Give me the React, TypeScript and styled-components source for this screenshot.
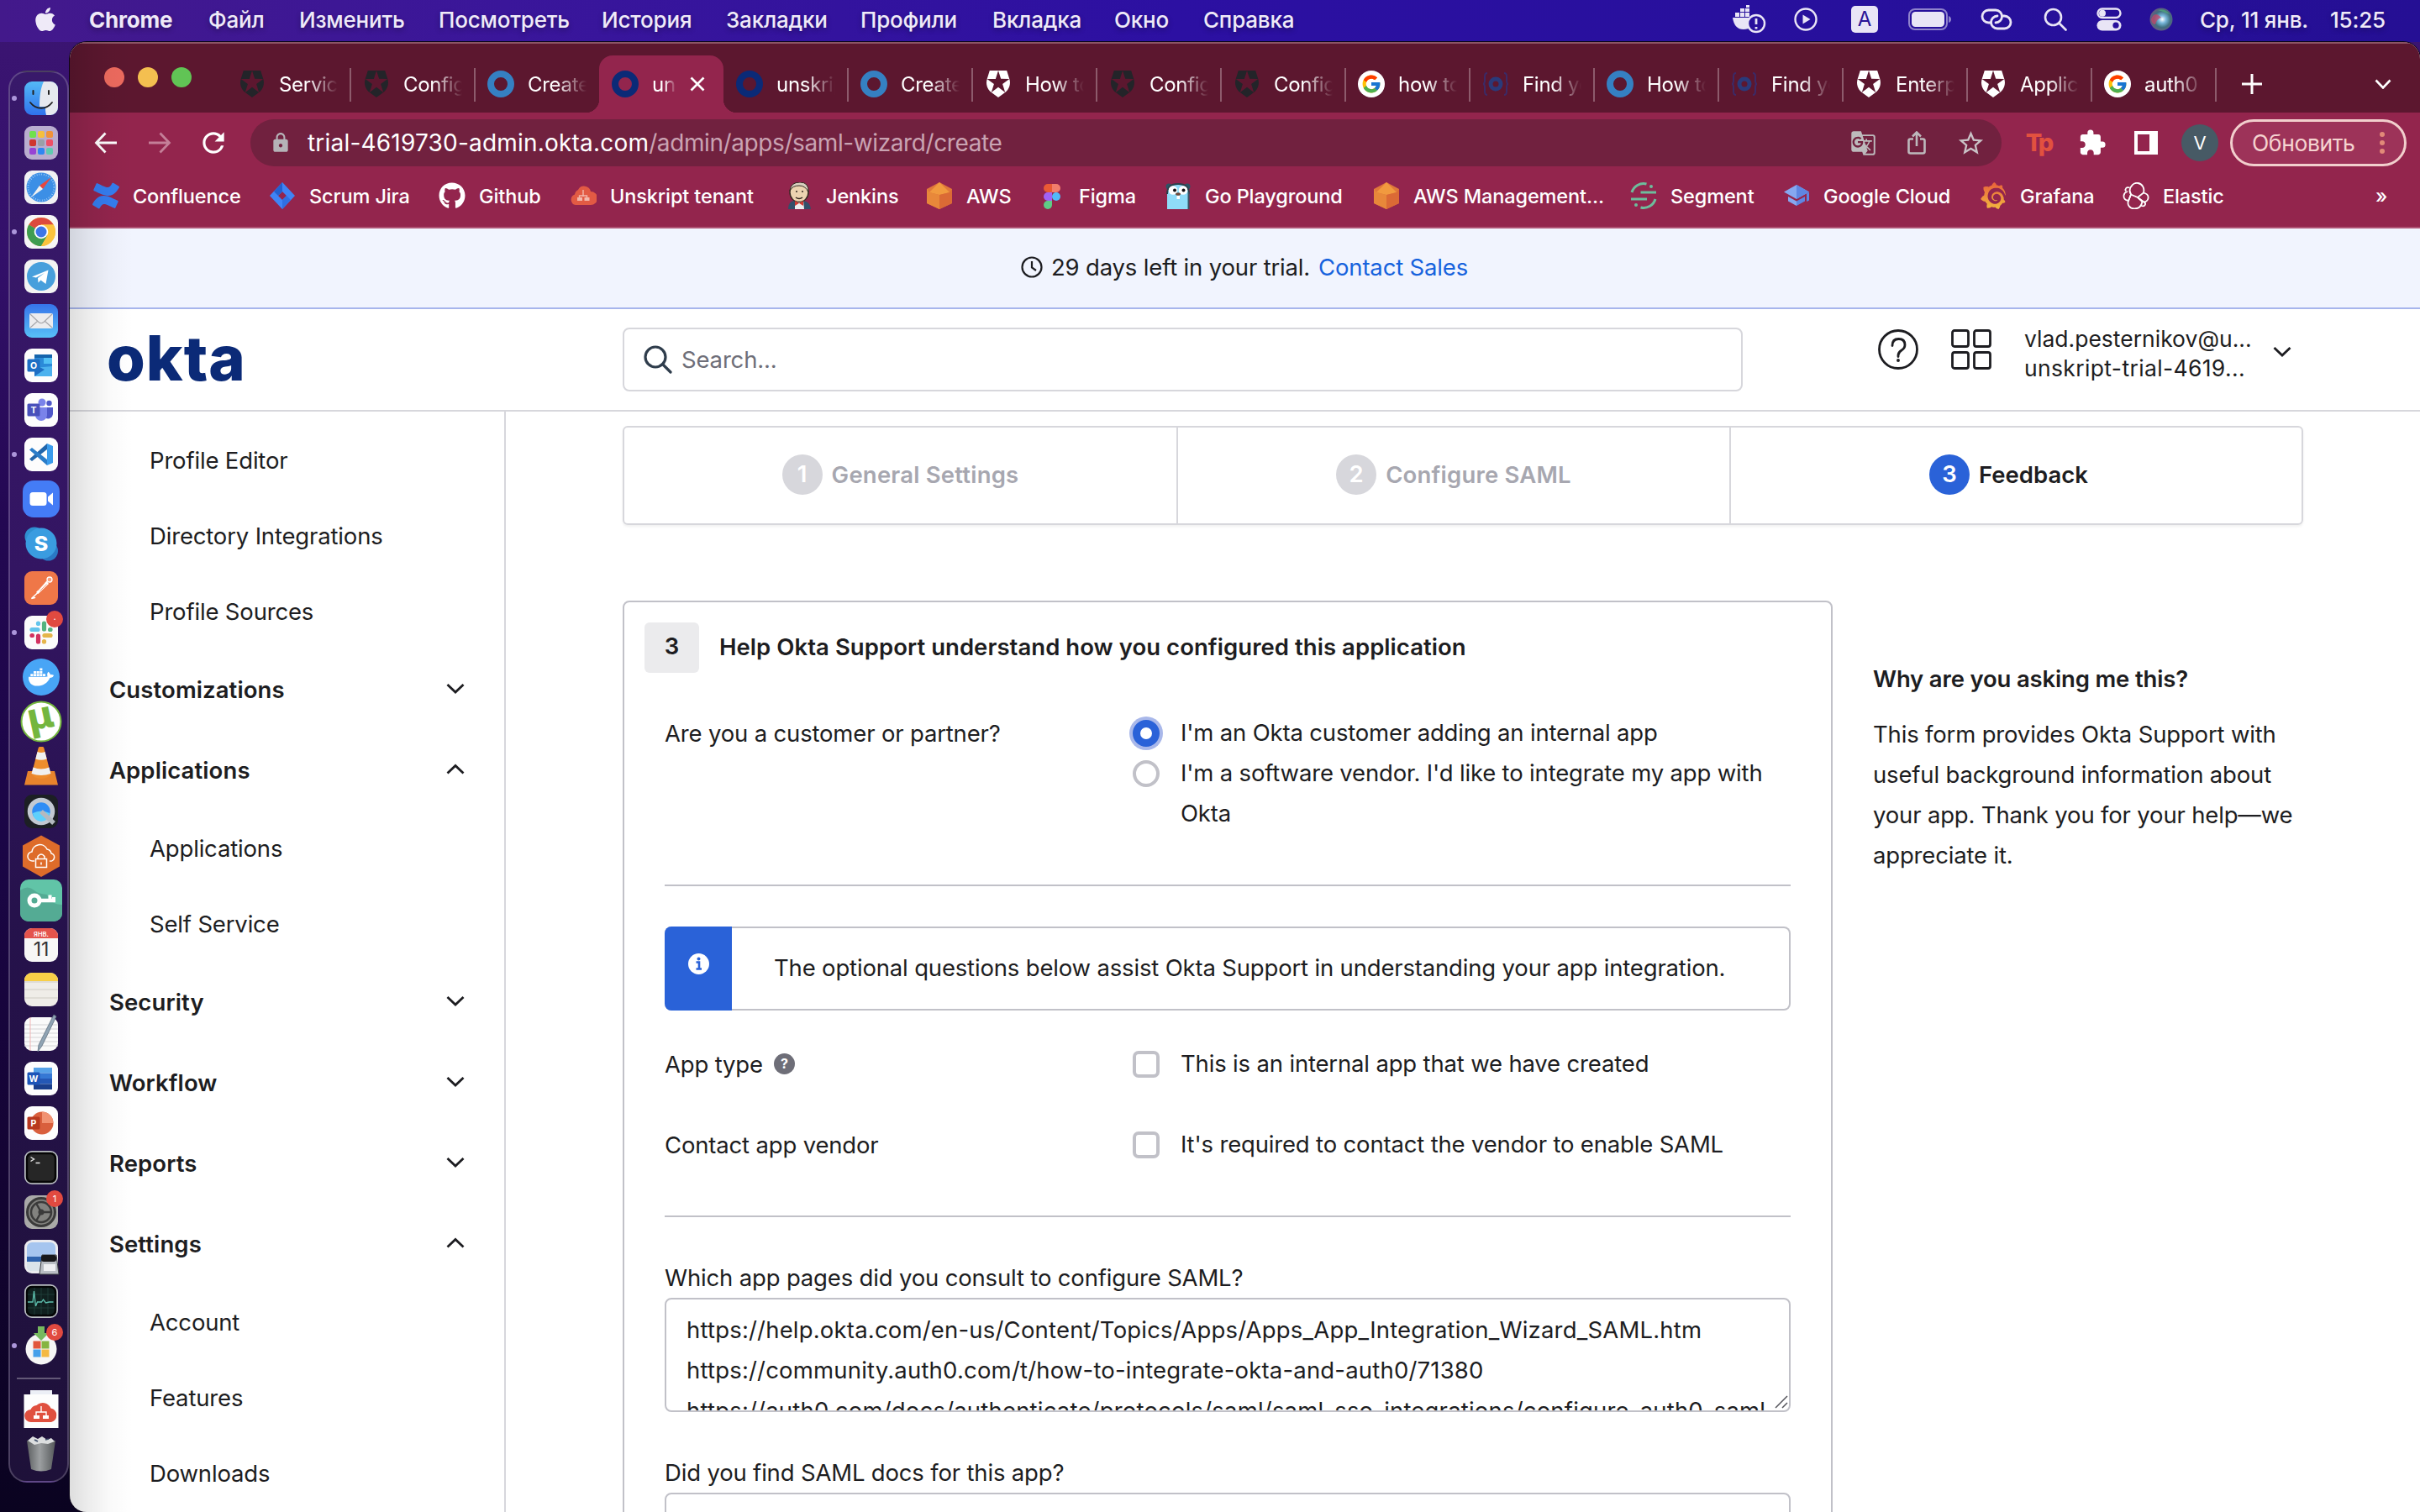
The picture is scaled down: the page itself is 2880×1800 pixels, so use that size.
import React from 'react';
import styled, { createGlobalStyle, css } from 'styled-components';
import { FaApple, FaDocker, FaGithub, FaConfluence } from 'react-icons/fa';
import { FcGoogle } from 'react-icons/fc';
import { MdGTranslate, MdStarBorder, MdExtension, MdLock, MdRefresh } from 'react-icons/md';
import { SiGrafana } from 'react-icons/si';

const ui = '"Inter", "Liberation Sans", sans-serif';
const ink = '#1d1d21';
const line = '#d7d7dc';
const lineDark = '#c1c1c8';
const blue = '#2a62d8';

const Global = createGlobalStyle`
  * { box-sizing: border-box; }
  html, body { margin: 0; padding: 0; }
  body { width: 2880px; height: 1800px; overflow: hidden; font-family: ${ui}; }
  svg { display: block; flex: none; }
`;

/* ---------- desktop ---------- */

const Desktop = styled.div`
  width: 2880px;
  height: 1800px;
  overflow: hidden;
  display: flex;
  flex-direction: column;
  background: linear-gradient(180deg, #3c1573 0, #33106a 300px, #230852 620px, #1b0646 1000px, #140433 1400px, #0a0320 1800px);
`;

const MenuBar = styled.div`
  flex: none;
  height: 50px;
  padding-bottom: 4px;
  display: flex;
  align-items: center;
  color: #efeaf8;
  font-size: 26px;
  background: linear-gradient(90deg, #43198b 0, #3a169a 600px, #2c10a2 1400px, #27109c 2200px, #250f94 2880px);
  text-shadow: 0 3px 6px rgba(0, 0, 0, 0.3);
`;

const AppleCell = styled.div`
  width: 106px;
  padding-left: 38px;
`;

const MenuItem = styled.div<{ $w: number; $strong?: boolean }>`
  width: ${(p) => p.$w}px;
  font-weight: ${(p) => (p.$strong ? 700 : 500)};
  letter-spacing: -0.2px;
  white-space: nowrap;
`;

const StatusArea = styled.div`
  margin-left: auto;
  display: flex;
  align-items: center;
  padding-right: 38px;
`;

const StatusCell = styled.div<{ $w: number }>`
  width: ${(p) => p.$w}px;
  display: flex;
  justify-content: center;
`;

const InputSource = styled.div`
  width: 32px;
  height: 32px;
  border-radius: 5px;
  background: #e9e5f6;
  color: #2a1396;
  font-size: 24px;
  line-height: 32px;
  text-align: center;
  text-shadow: none;
`;

const Clock = styled.div<{ $w: number }>`
  width: ${(p) => p.$w}px;
  white-space: nowrap;
  font-weight: 500;
  letter-spacing: -0.2px;
`;

const ClockGroup = styled.div`
  display: flex;
  margin-left: 14px;
`;

const Workspace = styled.div`
  flex: 1;
  display: flex;
  min-height: 0;
`;

/* ---------- dock ---------- */

const DockColumn = styled.div`
  width: 83px;
  flex: none;
  padding: 34px 1px 0 10px;
`;

const DockBar = styled.div`
  height: 1681px;
  border: 2px solid rgba(255, 255, 255, 0.2);
  border-radius: 22px;
  background: linear-gradient(180deg, #38196a 0, #331562 600px, #26124c 1000px, #1e1139 1681px);
  padding-top: 4px;
  display: flex;
  flex-direction: column;
  align-items: center;
`;

const DockSlot = styled.div`
  position: relative;
  width: 68px;
  height: 53.07px;
  flex: none;
  display: flex;
  align-items: center;
  justify-content: center;
  padding-left: 6px;
  svg { overflow: visible; }
`;

const RunningDot = styled.span`
  position: absolute;
  left: 2px;
  top: calc(50% - 3px);
  width: 6px;
  height: 6px;
  border-radius: 50%;
  background: #ac96da;
`;

const DockBadge = styled.span`
  position: absolute;
  left: 43px;
  top: 0;
  width: 20px;
  height: 20px;
  border-radius: 50%;
  background: #e14a40;
  color: #fff;
  font-size: 11px;
  line-height: 20px;
  text-align: center;
`;

const DockRule = styled.div`
  width: 52px;
  height: 2px;
  margin: 11px 0 10px 0;
  background: rgba(255, 255, 255, 0.3);
`;

const Plate = ({ fill }: { fill: string }) => <rect x="8" y="8" width="40" height="40" rx="9" fill={fill} />;

const Art: React.FC<{ children: React.ReactNode }> = ({ children }) => (
  <svg width="56" height="56" viewBox="0 0 56 56">
    {children}
  </svg>
);

const FinderArt = () => (
  <Art>
    <defs>
      <linearGradient id="fd" x1="0" y1="0" x2="0" y2="1">
        <stop offset="0" stopColor="#54b9f6" />
        <stop offset="1" stopColor="#2f72ec" />
      </linearGradient>
    </defs>
    <Plate fill="url(#fd)" />
    <path d="M31 8h8a9 9 0 0 1 9 9v22a9 9 0 0 1-9 9h-5c-1-4-1-6-1-10h-7c0-10 1-22 5-30z" fill="#e6e9ef" />
    <path d="M18.500 19v4M37 19v4" stroke="#222" strokeWidth="2" strokeLinecap="round" />
    <path d="M15 33c7 9 19 9 26 0" stroke="#222" strokeWidth="1.800" fill="none" strokeLinecap="round" />
  </Art>
);

const launchColors = ['#6fe04d', '#f5bf3f', '#f0923a', '#cf3630', '#9aa0a8', '#ee4f66', '#9742d4', '#2f86f2', '#5fcbb0'];
const LaunchpadArt = () => (
  <Art>
    <Plate fill="#b9adcf" />
    {launchColors.map((c, i) => (
      <rect key={c} x={14 + (i % 3) * 10} y={14 + Math.floor(i / 3) * 10} width="8" height="8" rx="2" fill={c} />
    ))}
  </Art>
);

const SafariArt = () => (
  <Art>
    <Plate fill="#f1f1f3" />
    <circle cx="28" cy="28" r="17.500" fill="#3c8fe6" />
    <circle cx="28" cy="28" r="15.500" fill="none" stroke="#a9d2f7" strokeWidth="2" strokeDasharray="0.8 2" />
    <path d="M40 16 30 30l-4-4z" fill="#e8473e" />
    <path d="M16 40 26 26l4 4z" fill="#f1f1f1" />
  </Art>
);

const ChromeArt = () => (
  <Art>
    <Plate fill="#f6f6f6" />
    <circle cx="28" cy="28" r="17" fill="#fbc43e" />
    <path d="M28 28 13.300 19.500A17 17 0 0 1 42.700 19.500H28z" fill="#dd4b3e" />
    <path d="M28 28 13.300 19.500A17 17 0 0 0 28 45l7.400-12.800z" fill="#3f9d51" />
    <path d="M28 28V19.500H42.700A17 17 0 0 1 28 45l7.400-12.800z" fill="#fbc43e" />
    <circle cx="28" cy="28" r="8.300" fill="#fff" />
    <circle cx="28" cy="28" r="6.500" fill="#3d76e8" />
  </Art>
);

const TelegramArt = () => (
  <Art>
    <Plate fill="#f3f3f3" />
    <circle cx="28" cy="28" r="17" fill="#479fdc" />
    <path d="M17 28.500 36.500 20.500 33.500 37l-6-4.500-3 3-.5-5.500 8-6-10 5.500z" fill="#fff" />
  </Art>
);

const MailArt = () => (
  <Art>
    <defs>
      <linearGradient id="ml" x1="0" y1="0" x2="0" y2="1">
        <stop offset="0" stopColor="#3674ea" />
        <stop offset="1" stopColor="#58c0f7" />
      </linearGradient>
    </defs>
    <Plate fill="url(#ml)" />
    <rect x="14" y="19" width="28" height="18" rx="2" fill="#ececee" />
    <path d="m15 20 10 9.500q3 2.500 6 0L41 20M15 36l9-8M41 36l-9-8" fill="none" stroke="#a7a7ab" strokeWidth="1.200" />
  </Art>
);

const OfficeTile: React.FC<{ letter: string; color: string; children: React.ReactNode }> = ({ letter, color, children }) => (
  <Art>
    <Plate fill="#fdfdfd" />
    {children}
    <rect x="11.500" y="20.500" width="15" height="15" rx="1.500" fill={color} />
    <text x="19" y="32" fontSize="10.500" fontWeight="700" fill="#fff" textAnchor="middle">
      {letter}
    </text>
  </Art>
);

const OutlookArt = () => (
  <OfficeTile letter="O" color="#1f6fc4">
    <rect x="20" y="15" width="21" height="26" fill="#2b8ad8" />
    <path d="M20 15h21v4H20z" fill="#1564ac" />
    <path d="M31 19h10v7H31z" fill="#52c0f4" />
    <path d="m20 31 21-2v12H20z" fill="#4cb2ee" />
    <path d="m20 27 12 6-12 8z" fill="#1f6fc4" />
  </OfficeTile>
);

const TeamsArt = () => (
  <OfficeTile letter="T" color="#4850bb">
    <circle cx="29" cy="19" r="4.500" fill="#7a83ea" />
    <circle cx="37.500" cy="20" r="3.200" fill="#4f57c8" />
    <path d="M31 25h11v8a6 6 0 0 1-8 5z" fill="#4f57c8" />
    <path d="M21 25h14v9a7 7 0 0 1-14 0z" fill="#7a83ea" />
  </OfficeTile>
);

const VsCodeArt = () => (
  <Art>
    <Plate fill="#fdfdfd" />
    <path d="m35 15 7 3v20l-7 3z" fill="#3b9cec" />
    <path d="M35 15v7L17 36l-3-2.500z" fill="#2166ac" />
    <path d="M35 41v-7L17 20l-3 2.500z" fill="#2b7dc9" />
  </Art>
);

const ZoomArt = () => (
  <Art>
    <rect x="6" y="6" width="44" height="44" rx="13" fill="#447cf6" />
    <rect x="14.500" y="20" width="20" height="16" rx="3.500" fill="#fff" />
    <path d="m36 25.500 6-5v15l-6-5z" fill="#fff" />
  </Art>
);

const SkypeArt = () => (
  <Art>
    <circle cx="20" cy="20" r="11.500" fill="#2e8fd0" />
    <circle cx="36.500" cy="37" r="11.500" fill="#2a78c4" />
    <circle cx="28" cy="28" r="18.500" fill="#3a9ce0" />
    <text x="28" y="37" fontSize="25" fontWeight="800" fill="#fff" textAnchor="middle">
      S
    </text>
  </Art>
);

const PostmanArt = () => (
  <Art>
    <Plate fill="#ef7748" />
    <circle cx="38" cy="18" r="3" fill="#f6a183" stroke="#fff" strokeWidth="1.300" />
    <path d="M34.500 19.500 22 33l2.500 2L37 23z" fill="#fff" />
    <path d="m32 22-8 9M34.500 23.500l-8 8" stroke="#ef7748" strokeWidth="0.700" />
    <path d="m23.500 34-7 6.500 4-1" stroke="#fff" strokeWidth="1.600" strokeLinecap="round" fill="none" />
  </Art>
);

const SlackArt = () => (
  <Art>
    <Plate fill="#fbfbfb" />
    <g strokeWidth="5.200" strokeLinecap="round">
      <path d="M17 24.500h7" stroke="#62c4ec" />
      <path d="M24.500 17v.4" stroke="#62c4ec" />
      <path d="M31.500 17v7" stroke="#53b37f" />
      <path d="M39 24.500h-.4" stroke="#53b37f" />
      <path d="M32 31.500h7" stroke="#e5b54b" />
      <path d="M31.500 39v-.4" stroke="#e5b54b" />
      <path d="M24.500 32v7" stroke="#d2325f" />
      <path d="M17 31.500h.4" stroke="#d2325f" />
    </g>
  </Art>
);

const DockerArt = () => (
  <Art>
    <circle cx="28" cy="28" r="22" fill="#48a5f6" />
    <g transform="translate(13 13)">
      <FaDocker size={30} color="#fff" />
    </g>
  </Art>
);

const TorrentArt = () => (
  <Art>
    <circle cx="28" cy="28" r="23.500" fill="#fff" stroke="#74b63e" strokeWidth="2" />
    <text x="28" y="37" fontSize="46" fontWeight="800" fill="#74b63e" textAnchor="middle" transform="rotate(-12 28 28)">
      µ
    </text>
  </Art>
);

const VlcArt = () => (
  <Art>
    <path d="M12 34h32l4 16.500H8z" fill="#e8842c" />
    <path d="M26 5h4q1 0 1.500 2L39 36q-1 7-11 7t-11-7l7.500-29Q25 5 26 5z" fill="#ee8d2d" />
    <path d="m23.500 11-2.200 8.500q6.700 2.500 13.400 0L32.500 11q-4.500 2-9 0zM18.500 29.500 16.500 37q11.500 4 23 0l-2-7.500q-9.500 4-19 0z" fill="#f0f0f0" />
  </Art>
);

const QuickTimeArt = () => (
  <Art>
    <Plate fill="#1c1f24" />
    <circle cx="28" cy="28" r="13.500" fill="#2f8df5" stroke="#c3c9d2" strokeWidth="5.500" />
    <path d="M18 30a10 10 0 0 0 20 0q-10-5-20 0z" fill="#5fd0fb" />
    <path d="m28 28 15 14" stroke="#b4b9c0" strokeWidth="5.500" />
  </Art>
);

const HexArt = () => (
  <Art>
    <path d="M28 3.500 50 15.500v25L28 53 6 40.500v-25z" fill="#de6c2a" />
    <path d="M20 34h-2a5.500 5.500 0 0 1-1-11 9.500 9.500 0 0 1 18-3 6 6 0 0 1 5 5 4.500 4.500 0 0 1-2 9" fill="none" stroke="#fff" strokeWidth="1.500" />
    <rect x="21.500" y="31.500" width="13" height="10" fill="none" stroke="#fff" strokeWidth="1.500" />
    <path d="M24 31.500v-3q4-5 8 0v3M28 35.500v3" fill="none" stroke="#fff" strokeWidth="1.500" />
  </Art>
);

const KeyArt = () => (
  <Art>
    <rect x="3" y="3" width="50" height="50" rx="10" fill="#61c4a7" />
    <path d="M3 16q9-7 17 0 3 4 15 5 4 12 18 12v10a10 10 0 0 1-10 10H13A10 10 0 0 1 3 43z" fill="#54ab94" />
    <circle cx="20" cy="28" r="6" fill="none" stroke="#fff" strokeWidth="5" />
    <path d="M28 28h17" stroke="#fff" strokeWidth="4.500" />
    <path d="M38.500 21.500v6M43 24v3" stroke="#fff" strokeWidth="4" />
  </Art>
);

const CalendarArt = () => (
  <Art>
    <Plate fill="#f7f7f6" />
    <path d="M8 20v-3a9 9 0 0 1 9-9h22a9 9 0 0 1 9 9v3z" fill="#e4544c" />
    <text x="28" y="17.500" fontSize="7.500" fontWeight="600" fill="#fff" textAnchor="middle">
      ЯНВ.
    </text>
    <text x="28" y="41" fontSize="23" fill="#333" textAnchor="middle">
      11
    </text>
  </Art>
);

const NotesArt = () => (
  <Art>
    <Plate fill="#efede8" />
    <path d="M8 18v-1a9 9 0 0 1 9-9h22a9 9 0 0 1 9 9v1z" fill="#f8cf47" />
    <path d="M8 19h40M8 28h40M8 38h40" stroke="#cfccc4" strokeWidth="1" />
  </Art>
);

const TextEditArt = () => (
  <Art>
    <Plate fill="#fafafa" />
    <path d="M8 17h40M8 22h40M8 27h40M8 32h40M8 37h40M8 42h40" stroke="#d4d4d6" strokeWidth="1" />
    <path d="M15 8v40" stroke="#f1b5b5" strokeWidth="1" />
    <path d="M43 5 46 7 29 42l-5 7 1-8z" fill="#90a4b4" stroke="#5f7080" strokeWidth="0.800" />
  </Art>
);

const WordArt = () => (
  <OfficeTile letter="W" color="#1d55b8">
    <rect x="19" y="15" width="22" height="6.500" fill="#56a2e8" />
    <rect x="19" y="21.500" width="22" height="6.500" fill="#3578d4" />
    <rect x="19" y="28" width="22" height="6.500" fill="#2458b5" />
    <rect x="19" y="34.500" width="22" height="6.500" fill="#1a3f8c" />
  </OfficeTile>
);

const PowerPointArt = () => (
  <OfficeTile letter="P" color="#b8391f">
    <circle cx="29" cy="28" r="13.500" fill="#d95f3d" />
    <path d="M29 14.500A13.500 13.500 0 0 1 42.500 28H29z" fill="#f19272" />
  </OfficeTile>
);

const TerminalArt = () => (
  <Art>
    <rect x="9" y="9" width="38" height="38" rx="8" fill="#262626" stroke="#b9bdc2" strokeWidth="2" />
    <rect x="11" y="11" width="34" height="34" rx="6" fill="none" stroke="#050505" strokeWidth="2.500" />
    <path d="m15.500 15.500 4 2.500-4 2.500M21.500 22.500h5" fill="none" stroke="#e8e8e8" strokeWidth="1.400" />
  </Art>
);

const GearArt = () => (
  <Art>
    <Plate fill="#a9a9a8" />
    <circle cx="28" cy="28" r="16.500" fill="#82827f" stroke="#3a3a3a" strokeWidth="3" />
    <circle cx="28" cy="28" r="12" fill="none" stroke="#3a3a3a" strokeWidth="2.500" />
    <path d="m28 28 12 0M28 28l-6-10.500M28 28l-6 10.500" stroke="#3a3a3a" strokeWidth="2.500" />
    <circle cx="28" cy="28" r="3.500" fill="#3a3a3a" />
  </Art>
);

const PreviewArt = () => (
  <Art>
    <Plate fill="#ececf0" />
    <rect x="11" y="11" width="34" height="34" rx="6" fill="#a6c5ef" />
    <path d="M11 28h34v6H11z" fill="#2f63ad" />
    <path d="M11 34h34v5q0 6-6 6H17q-6 0-6-6z" fill="#dbe4ea" />
    <path d="M29 26h17l3 23H26z" fill="#b9bec4" stroke="#3a3d42" strokeWidth="1" />
    <rect x="28" y="26" width="18" height="8" rx="3" fill="#17181b" />
    <rect x="31" y="37" width="14" height="8" fill="#eef0f2" />
  </Art>
);

const ActivityArt = () => (
  <Art>
    <rect x="9" y="9" width="38" height="38" rx="8" fill="#10201f" stroke="#b9bdc2" strokeWidth="2" />
    <rect x="11" y="11" width="34" height="34" rx="6" fill="none" stroke="#030505" strokeWidth="2.500" />
    <path d="M20 12v32M28 12v32M36 12v32M12 20h32M12 36h32" stroke="#22413c" strokeWidth="0.800" />
    <path d="M12 29h6l1.500-13 2 18 2-5h5l2-3 3 4 4-1h5" fill="none" stroke="#5dbfae" strokeWidth="1.300" />
  </Art>
);

const UpdaterArt = () => (
  <Art>
    <circle cx="28" cy="32" r="18.500" fill="#f6f6f6" />
    <path d="M24 5h8v8h5l-9 9-9-9h5z" fill="#76b95f" />
    <rect x="18.500" y="22.500" width="9" height="9" fill="#e1563b" />
    <rect x="28.500" y="22.500" width="9" height="9" fill="#86b540" />
    <rect x="18.500" y="32.500" width="9" height="9" fill="#46a0ea" />
    <rect x="28.500" y="32.500" width="9" height="9" fill="#f4b942" />
  </Art>
);

const FileArt = () => (
  <Art>
    <rect x="15" y="5" width="26" height="8" fill="#eceff6" />
    <rect x="7.500" y="10" width="41" height="40" fill="#fdfdfd" />
    <path d="M16 43a7.500 7.500 0 0 1-.500-15 8 8 0 0 1 7-5 10.500 10.500 0 0 1 17 3.500A8.500 8.500 0 0 1 40 43z" fill="#e0503f" />
    <path d="M28 24v7M22 36v-5h12v5" fill="none" stroke="#fff" strokeWidth="1.400" />
    <rect x="19" y="35" width="7" height="4" fill="#fff" />
    <rect x="30" y="35" width="7" height="4" fill="#fff" />
  </Art>
);

const TrashArt = () => (
  <Art>
    <defs>
      <linearGradient id="tr" x1="0" y1="0" x2="1" y2="0">
        <stop offset="0" stopColor="#5c5f61" />
        <stop offset="0.450" stopColor="#9c9fa1" />
        <stop offset="1" stopColor="#55585a" />
      </linearGradient>
    </defs>
    <path d="M11 12h34l-5 34q-12 5-24 0z" fill="url(#tr)" />
    <path d="m12 12 6-5 6 3 5-3 6 4 5-2 4 4-8 3-8-1-8 2z" fill="#dcdedf" />
    <path d="m20 11 4 2M33 11l4-1" stroke="#3f4f6a" strokeWidth="1.800" />
  </Art>
);

type DockApp = { art: React.FC; running?: boolean; badge?: string };
const dockApps: DockApp[] = [
  { art: FinderArt, running: true },
  { art: LaunchpadArt },
  { art: SafariArt },
  { art: ChromeArt, running: true },
  { art: TelegramArt },
  { art: MailArt },
  { art: OutlookArt },
  { art: TeamsArt },
  { art: VsCodeArt, running: true },
  { art: ZoomArt },
  { art: SkypeArt },
  { art: PostmanArt },
  { art: SlackArt, running: true, badge: '·' },
  { art: DockerArt },
  { art: TorrentArt },
  { art: VlcArt },
  { art: QuickTimeArt },
  { art: HexArt },
  { art: KeyArt },
  { art: CalendarArt },
  { art: NotesArt },
  { art: TextEditArt },
  { art: WordArt },
  { art: PowerPointArt },
  { art: TerminalArt },
  { art: GearArt, badge: '1' },
  { art: PreviewArt },
  { art: ActivityArt },
  { art: UpdaterArt, running: true, badge: '6' },
];

const Dock = () => (
  <DockColumn>
    <DockBar>
      {dockApps.map(({ art: A, running, badge }, i) => (
        <DockSlot key={i}>
          {running && <RunningDot />}
          <A />
          {badge && <DockBadge>{badge}</DockBadge>}
        </DockSlot>
      ))}
      <DockRule />
      <DockSlot>
        <FileArt />
      </DockSlot>
      <DockSlot>
        <TrashArt />
      </DockSlot>
    </DockBar>
  </DockColumn>
);

/* ---------- browser window ---------- */

const BrowserWindow = styled.div`
  position: relative;
  flex: 1;
  min-width: 0;
  display: flex;
  flex-direction: column;
  overflow: hidden;
  border-radius: 20px 20px 0 20px;
  background: #fff;
  box-shadow: 0 0 0 1px #0b0518;
  &::after {
    content: '';
    position: absolute;
    inset: 0 auto 0 0;
    width: 76px;
    pointer-events: none;
    background: linear-gradient(90deg, rgba(0, 0, 0, 0.13), rgba(0, 0, 0, 0.07) 30%, rgba(0, 0, 0, 0.02) 65%, transparent);
  }
`;

const TabStrip = styled.div`
  flex: none;
  height: 84px;
  display: flex;
  align-items: flex-end;
  background: #5c172f;
  box-shadow: inset 0 2px 0 #8b5565;
`;

const TrafficLights = styled.div`
  width: 186px;
  height: 84px;
  padding-left: 41px;
  display: flex;
  align-items: center;
  gap: 16px;
`;

const Light = styled.span<{ $c: string }>`
  width: 24px;
  height: 24px;
  border-radius: 50%;
  background: ${(p) => p.$c};
`;

const Tab = styled.div<{ $active?: boolean; $rule?: boolean }>`
  position: relative;
  flex: none;
  width: 148px;
  height: 68px;
  padding-left: 15px;
  display: flex;
  align-items: center;
  gap: 16px;
  color: #fff;
  font-size: 24px;
  ${(p) =>
    p.$rule &&
    css`
      &::after {
        content: '';
        position: absolute;
        right: -1px;
        top: 15px;
        width: 2px;
        height: 40px;
        background: #8d5b6c;
      }
    `}
  ${(p) =>
    p.$active &&
    css`
      background: #93254d;
      border-radius: 16px 16px 0 0;
      &::before,
      &::after {
        content: '';
        position: absolute;
        bottom: 0;
        width: 16px;
        height: 16px;
      }
      &::before {
        left: -16px;
        background: radial-gradient(circle at 0 0, transparent 16px, #93254d 16.5px);
      }
      &::after {
        right: -16px;
        background: radial-gradient(circle at 100% 0, transparent 16px, #93254d 16.5px);
      }
    `}
`;

const TabTitle = styled.span<{ $w: number }>`
  width: ${(p) => p.$w}px;
  overflow: hidden;
  white-space: nowrap;
  letter-spacing: -0.3px;
  mask-image: linear-gradient(90deg, #000 50%, transparent 100%);
`;

const StripButton = styled.div<{ $w: number }>`
  width: ${(p) => p.$w}px;
  height: 68px;
  display: flex;
  align-items: center;
  justify-content: center;
`;

const Spacer = styled.div`
  flex: 1;
`;

const Toolbar = styled.div`
  flex: none;
  height: 72px;
  padding: 0 16px 0 11px;
  display: flex;
  align-items: center;
  background: #93254d;
`;

const ToolCell = styled.div`
  width: 64px;
  flex: none;
  display: flex;
  justify-content: center;
`;

const AddressBar = styled.div`
  width: 2084px;
  height: 56px;
  margin: 0 12px;
  padding: 0 5px 0 23px;
  border-radius: 28px;
  display: flex;
  align-items: center;
  background: #71213f;
  color: #fff;
  font-size: 28px;
  letter-spacing: 0.2px;
`;

const AddressText = styled.div`
  padding-left: 19px;
  flex: 1;
  white-space: nowrap;
`;

const AddressPath = styled.span`
  color: #c9a3b2;
  letter-spacing: -0.4px;
`;

const Avatar = styled.div`
  width: 44px;
  height: 44px;
  border-radius: 50%;
  background: #475a65;
  color: #fff;
  font-size: 22px;
  line-height: 44px;
  text-align: center;
`;

const UpdateButton = styled.div`
  width: 210px;
  height: 56px;
  margin-left: 4px;
  padding-left: 23px;
  border: 3px solid #f2cfcd;
  border-radius: 28px;
  background: #9d3359;
  color: #f5d3d0;
  font-size: 26.5px;
  letter-spacing: -0.4px;
  display: flex;
  align-items: center;
  gap: 29px;
`;

const BookmarksBar = styled.div`
  flex: none;
  height: 66px;
  padding: 0 0 10px 27px;
  display: flex;
  align-items: center;
  background: #93254d;
  border-bottom: 2px solid #ae5374;
  color: #fff;
  font-size: 23.5px;
  font-weight: 500;
`;

const Bookmark = styled.div<{ $w: number }>`
  width: ${(p) => p.$w}px;
  flex: none;
  display: flex;
  align-items: center;
  gap: 16px;
  white-space: nowrap;
  letter-spacing: -0.12px;
`;

const IconBox = styled.span`
  width: 32px;
  height: 32px;
  flex: none;
  display: flex;
  align-items: center;
  justify-content: center;
`;

/* favicons */

const shieldPath =
  'M21.98 7.448L19.62 0H4.347L2.02 7.448c-1.352 4.312.03 9.206 3.815 12.015L12.007 24l6.157-4.552c3.755-2.81 5.182-7.688 3.815-12.015l-6.160 4.580 2.343 7.450-6.157-4.597-6.158 4.580 2.358-7.433-6.188-4.550 7.630-.045L12.008 0l2.356 7.404 7.615.044z';

const Shield = ({ color }: { color: string }) => (
  <svg width="32" height="32" viewBox="0 0 24 24">
    <path d={shieldPath} fill={color} />
  </svg>
);

const Ring = ({ color }: { color: string }) => (
  <svg width="32" height="32" viewBox="0 0 32 32">
    <circle cx="16" cy="16" r="12" fill="none" stroke={color} strokeWidth="8" />
  </svg>
);

const BraceRing = () => (
  <svg width="32" height="32" viewBox="0 0 32 32" fill="none">
    <circle cx="16" cy="16" r="6" stroke="#2a3a7a" strokeWidth="5" />
    <path d="M6 3Q3 3 3 7v5q0 4-2 4 2 0 2 4v5q0 4 3 4M26 3q3 0 3 4v5q0 4 2 4-2 0-2 4v5q0 4-3 4" stroke="#3c2a66" strokeWidth="2" />
  </svg>
);

const GoogleDisc = () => (
  <svg width="32" height="32" viewBox="0 0 32 32">
    <circle cx="16" cy="16" r="16" fill="#fff" />
    <g transform="translate(3.500 3.500)">
      <FcGoogle size={25} />
    </g>
  </svg>
);

type TabInfo = { title: string; icon: React.ReactNode; active?: boolean; rule?: boolean };
const darkShield = <Shield color="#232429" />;
const whiteShield = <Shield color="#fff" />;
const lightRing = <Ring color="#3580c2" />;
const navyRing = <Ring color="#0b2a77" />;
const tabs: TabInfo[] = [
  { title: 'Service', icon: darkShield, rule: true },
  { title: 'Config', icon: darkShield, rule: true },
  { title: 'Create', icon: lightRing },
  { title: 'uns', icon: navyRing, active: true },
  { title: 'unskript', icon: navyRing, rule: true },
  { title: 'Create', icon: lightRing, rule: true },
  { title: 'How to', icon: whiteShield, rule: true },
  { title: 'Config', icon: darkShield, rule: true },
  { title: 'Config', icon: darkShield, rule: true },
  { title: 'how to', icon: <GoogleDisc />, rule: true },
  { title: 'Find yo', icon: <BraceRing />, rule: true },
  { title: 'How to', icon: lightRing, rule: true },
  { title: 'Find yo', icon: <BraceRing />, rule: true },
  { title: 'Enterpr', icon: whiteShield, rule: true },
  { title: 'Applica', icon: whiteShield, rule: true },
  { title: 'auth0', icon: <GoogleDisc />, rule: true },
];

const JiraIcon = () => (
  <svg width="32" height="32" viewBox="0 0 32 32">
    <path d="M16 0 31 16 16 32 1 16zM16 11l-5 5 5 5 5-5z" fill="#3f84f6" fillRule="evenodd" />
    <path d="M16 0v11l-5 5-5-5z" fill="#2360d0" />
    <path d="M16 32V21l5-5 5 5z" fill="#2f6fe2" />
  </svg>
);

const CloudIcon = () => (
  <svg width="32" height="32" viewBox="0 0 32 32">
    <path d="M7 27a6.500 6.500 0 0 1-1-12.500A7 7 0 0 1 10 9a8 8 0 0 1 15 2 8 8 0 0 1 0 16z" fill="#e25a44" />
    <path d="M16 9v8M11.500 20v-4h9v4" fill="none" stroke="#f3b8ac" strokeWidth="1.400" />
    <rect x="9" y="18" width="6" height="4" fill="#f3b8ac" />
    <rect x="17.500" y="18" width="6" height="4" fill="#f3b8ac" />
  </svg>
);

const JenkinsIcon = () => (
  <svg width="32" height="32" viewBox="0 0 32 32">
    <path d="M3 32q0-9 7-10h11q8 1 9 10z" fill="#33506a" />
    <path d="M11 21h10l1 11H11z" fill="#eee" />
    <ellipse cx="16" cy="12" rx="11" ry="11.500" fill="#ecd3b0" stroke="#32281f" strokeWidth="1.400" />
    <path d="M5 10Q6 0 17 0t10 12q-3-8-11-8T5 10z" fill="#d9d0c0" stroke="#32281f" />
    <path d="M12 11h2M19 11h2M12 18q4 3 8 0" stroke="#32281f" strokeWidth="1.500" fill="none" />
    <path d="m11 22 5 3 5-3v6l-5-3-5 3z" fill="#d33a31" />
  </svg>
);

const CubeIcon = () => (
  <svg width="32" height="32" viewBox="0 0 32 32">
    <path d="M16 0 31 8v17l-15 7L1 25V8z" fill="#e0783a" />
    <path d="M16 0 28 12l-12 3L4 12z" fill="#f19a3f" />
    <path d="m1 8 3 4 12 3v17L1 25z" fill="#e8883a" />
    <path d="m31 8-3 4-12 3v17l15-7z" fill="#db6a35" />
  </svg>
);

const FigmaIcon = () => (
  <svg width="32" height="32" viewBox="0 0 32 32">
    <path d="M11 2h5v10h-5a5 5 0 0 1 0-10z" fill="#ea5a35" />
    <path d="M16 2h5a5 5 0 0 1 0 10h-5z" fill="#f27d6c" />
    <path d="M11 12h5v10h-5a5 5 0 0 1 0-10z" fill="#a062f5" />
    <circle cx="21" cy="17" r="5" fill="#52b9f8" />
    <path d="M11 22h5v5a5 5 0 1 1-5-5z" fill="#5fcb86" />
  </svg>
);

const GopherIcon = () => (
  <svg width="32" height="32" viewBox="0 0 32 32">
    <circle cx="5" cy="5" r="3.500" fill="#2b5566" />
    <circle cx="27" cy="5" r="3.500" fill="#2b5566" />
    <path d="M3 32V13Q3 2 16 2t13 11v19z" fill="#8fdcf8" />
    <path d="M3 14Q3 2 16 2t13 12" fill="none" stroke="#2c3f4a" strokeWidth="2" />
    <path d="M28.500 12v20" stroke="#3a5666" strokeWidth="2" />
    <circle cx="10" cy="9.500" r="5.300" fill="#fff" />
    <circle cx="22" cy="9.500" r="5.300" fill="#fff" />
    <circle cx="12" cy="9.500" r="2" fill="#111" />
    <circle cx="22.500" cy="9.500" r="2" fill="#111" />
    <ellipse cx="16" cy="14" rx="3" ry="1.800" fill="#6d4a3a" />
    <rect x="14.500" y="16" width="3.500" height="4" fill="#fff" />
  </svg>
);

const SegmentIcon = () => (
  <svg width="32" height="32" viewBox="0 0 32 32" fill="none" stroke="#6dbd9c" strokeWidth="3">
    <path d="M2 12A14.500 14.500 0 0 1 19.500 2M30 20A14.500 14.500 0 0 1 12.500 30M12.500 12H31M1 20h19" />
    <circle cx="25" cy="5" r="2" fill="#6dbd9c" stroke="none" />
    <circle cx="7" cy="27" r="2" fill="#6dbd9c" stroke="none" />
  </svg>
);

const GCloudIcon = () => (
  <svg width="32" height="32" viewBox="0 0 32 32">
    <path d="m16 3 15 8.500L16 20 1 11.500z" fill="#86a8f0" />
    <path d="m16 3 15 8.500L16 20z" fill="#5f86e2" />
    <path d="m6 17 10 5.500V28L6 22.500z" fill="#86a8f0" />
    <path d="M16 22.500 26 17v5.500L16 28z" fill="#5f86e2" />
    <path d="M28 13.500 31 12v9.500l-3 1.500z" fill="#5f86e2" />
  </svg>
);

const GrafanaIcon = () => (
  <svg width="32" height="32" viewBox="0 0 32 32">
    <defs>
      <linearGradient id="gf" x1="0" y1="0" x2="0" y2="1">
        <stop offset="0" stopColor="#e8603a" />
        <stop offset="1" stopColor="#f3b93f" />
      </linearGradient>
    </defs>
    <g fill="url(#gf)">
      <SiGrafana size={32} color="url(#gf)" fill="url(#gf)" />
    </g>
  </svg>
);

const ElasticIcon = () => (
  <svg width="32" height="32" viewBox="0 0 32 32" fill="none" stroke="#fff" strokeWidth="1.800">
    <path d="M8.500 10.500C9 4 14 0 18.500 1c5 1 8 6 6.500 11.500L18 18l-8-3.500z" />
    <path d="M8.500 10.500 10 14.500l-3 7.500C3 21.500 1 19 1.500 15.500 2 13 4 11.500 6 11M4 10.500C2.500 8 4.500 5 8.500 6.500" />
    <path d="M25 12.500c4 1 6 3.500 5.500 6.500-.500 3-3 4.500-5 4.500L18 18" />
    <path d="M7 22c-2 5 2 9.500 7 9.500s8.500-3 9.500-8.500M10 14.500 7 22M23.500 23 18 18M25.500 23.500c3 1.500 1.500 6-3 4.500" />
  </svg>
);

const bookmarks: { label: string; w: number; icon: React.ReactNode }[] = [
  { label: 'Confluence', w: 210, icon: <FaConfluence size={32} color="#357df0" /> },
  { label: 'Scrum Jira', w: 202, icon: <JiraIcon /> },
  { label: 'Github', w: 156, icon: <FaGithub size={32} color="#fff" /> },
  { label: 'Unskript tenant', w: 257, icon: <CloudIcon /> },
  { label: 'Jenkins', w: 167, icon: <JenkinsIcon /> },
  { label: 'AWS', w: 134, icon: <CubeIcon /> },
  { label: 'Figma', w: 150, icon: <FigmaIcon /> },
  { label: 'Go Playground', w: 248, icon: <GopherIcon /> },
  { label: 'AWS Management...', w: 306, icon: <CubeIcon /> },
  { label: 'Segment', w: 182, icon: <SegmentIcon /> },
  { label: 'Google Cloud', w: 234, icon: <GCloudIcon /> },
  { label: 'Grafana', w: 170, icon: <GrafanaIcon /> },
  { label: 'Elastic', w: 301, icon: <ElasticIcon /> },
];

/* ---------- page ---------- */

const Page = styled.div`
  flex: 1;
  min-height: 0;
  display: flex;
  flex-direction: column;
  color: ${ink};
  font-size: 27.5px;
  letter-spacing: -0.17px;
`;

const TrialBanner = styled.div`
  flex: none;
  height: 96px;
  display: flex;
  align-items: center;
  padding-left: 1132px;
  padding-bottom: 2px;
  gap: 10px;
  background: #f1f4fe;
  border-bottom: 2px solid #a7b5ec;
  white-space: nowrap;
`;

const TrialLink = styled.a`
  color: #1662dd;
`;

const Header = styled.div`
  flex: none;
  height: 122px;
  display: flex;
  align-items: flex-start;
  border-bottom: 2px solid ${line};
`;

const Logo = styled.div`
  width: 658px;
  padding: 5px 0 0 44px;
  color: #0b2a77;
  font-size: 74px;
  font-weight: 800;
  line-height: 106px;
  letter-spacing: 1px;
`;

const SearchBox = styled.div`
  width: 1333px;
  height: 76px;
  margin-top: 22px;
  padding-left: 23px;
  display: flex;
  align-items: center;
  gap: 11px;
  border: 2px solid ${line};
  border-radius: 8px;
  color: #6e6e78;
`;

const HeaderTools = styled.div`
  padding: 24px 0 0 161px;
  display: flex;
`;

const HeaderIcon = styled.div`
  width: 87px;
  height: 48px;
`;

const Account = styled.div`
  width: 296px;
  margin-top: -6px;
  font-size: 26.5px;
  line-height: 35px;
  letter-spacing: 0;
  white-space: nowrap;
`;

const AccountOrg = styled.div`
  letter-spacing: 0.35px;
`;

const ChevronSlot = styled.div`
  padding-top: 20px;
`;

const Body = styled.div`
  flex: 1;
  min-height: 0;
  display: flex;
`;

const Sidebar = styled.nav`
  width: 519px;
  flex: none;
  padding-top: 13px;
  border-right: 2px solid ${line};
`;

const NavSection = styled.div`
  height: 96px;
  padding: 0 47px 0 47px;
  display: flex;
  align-items: center;
  justify-content: space-between;
  font-weight: 600;
  letter-spacing: 0.1px;
  svg { margin-bottom: 2px; }
`;

const NavLink = styled.div`
  height: 90px;
  padding-left: 95px;
  line-height: 90px;
`;

const Main = styled.main`
  flex: 1;
  min-width: 0;
  padding: 17px 0 0 139px;
  display: flex;
  flex-direction: column;
`;

const Steps = styled.div`
  flex: none;
  width: 2000px;
  height: 118px;
  display: grid;
  grid-template-columns: 659px 658px 1fr;
  border: 2px solid ${line};
  border-radius: 6px;
  box-shadow: 0 2px 3px rgba(0, 0, 0, 0.06);
`;

const Step = styled.div<{ $on?: boolean }>`
  display: flex;
  align-items: center;
  justify-content: center;
  gap: 11px;
  padding-right: ${(p) => (p.$on ? 18 : 0)}px;
  padding-bottom: 2px;
  border-right: ${(p) => (p.$on ? 'none' : `2px solid ${line}`)};
  color: ${(p) => (p.$on ? ink : '#a7a7b0')};
  font-weight: 600;
  letter-spacing: ${(p) => (p.$on ? 0 : 0.2)}px;
`;

const StepNumber = styled.span<{ $on?: boolean }>`
  width: 48px;
  height: 48px;
  border-radius: 50%;
  line-height: 47px;
  text-align: center;
  color: #fff;
  background: ${(p) => (p.$on ? blue : line)};
`;

const Columns = styled.div`
  flex: 1;
  min-height: 0;
  margin-top: 90px;
  display: flex;
`;

const Card = styled.section`
  width: 1440px;
  height: 1200px;
  padding: 24px 48px 0;
  border: 2px solid ${lineDark};
  border-radius: 8px;
`;

const CardHeader = styled.div`
  margin-left: -24px;
  height: 60px;
  display: flex;
  align-items: center;
  gap: 24px;
  font-weight: 600;
  letter-spacing: 0.05px;
`;

const CardNumber = styled.div`
  width: 65px;
  height: 60px;
  border-radius: 6px;
  line-height: 57px;
  text-align: center;
  background: #ebebed;
`;

const CardTitle = styled.div`
  padding-bottom: 3px;
`;

const FieldRow = styled.div<{ $gap: number }>`
  margin-top: ${(p) => p.$gap}px;
  display: grid;
  grid-template-columns: 557px 1fr;
  line-height: 48px;
`;

const FieldLabel = styled.div`
  display: flex;
  align-items: center;
  gap: 13px;
  height: 47px;
  white-space: nowrap;
`;

const Option = styled.label`
  display: flex;
  gap: 25px;
`;

const OptionText = styled.span`
  width: 720px;
  margin: -1px 0 1px;
`;

const RadioMark = styled.span<{ $on?: boolean }>`
  width: 32px;
  height: 32px;
  margin-top: 8px;
  flex: none;
  border-radius: 50%;
  background: #fff;
  border: ${(p) => (p.$on ? `9.5px solid ${blue}` : `4px solid ${lineDark}`)};
  box-shadow: ${(p) => (p.$on ? '0 0 0 4px #a9b8ea' : 'none')};
`;

const CheckMark = styled.span`
  width: 32px;
  height: 32px;
  margin-top: 8px;
  flex: none;
  border-radius: 7px;
  border: 4px solid ${lineDark};
`;

const Rule = styled.div<{ $gap: number }>`
  height: 2px;
  margin-top: ${(p) => p.$gap}px;
  background: ${lineDark};
`;

const Notice = styled.div`
  height: 100px;
  margin-top: 48px;
  display: flex;
  align-items: stretch;
  border: 2px solid ${lineDark};
  border-left: none;
  border-radius: 8px;
`;

const NoticeIcon = styled.div`
  width: 80px;
  margin: -2px 50px -2px 0;
  padding-bottom: 12px;
  border-radius: 8px 0 0 8px;
  display: flex;
  align-items: center;
  justify-content: center;
  background: ${blue};
`;

const NoticeText = styled.div`
  line-height: 95px;
`;

const Question = styled.div<{ $gap: number }>`
  margin-top: ${(p) => p.$gap}px;
  line-height: 48px;
`;

const TextBox = styled.div`
  position: relative;
  height: 136px;
  padding: 12px 20px 0 24px;
  overflow: hidden;
  border: 2px solid ${lineDark};
  border-radius: 8px;
  line-height: 48px;
  letter-spacing: 0.19px;
  white-space: nowrap;
`;

const Resizer = styled.svg`
  position: absolute;
  right: 1px;
  bottom: 2px;
`;

const Aside = styled.aside`
  width: 600px;
  padding: 69px 0 0 48px;
  line-height: 48px;
`;

const AsideTitle = styled.div`
  font-weight: 600;
`;

const AsideText = styled.p`
  width: 512px;
  margin: 18px 0 0;
`;

const Chevron = ({ up, color = ink }: { up?: boolean; color?: string }) => (
  <svg width="22" height="14" viewBox="0 0 22 14" fill="none" stroke={color} strokeWidth="2.800">
    <path d={up ? 'M1.500 11.500 11 2.500l9.500 9' : 'M1.500 2l9.500 9 9.500-9'} />
  </svg>
);

type NavEntry = { label: string; section?: boolean; open?: boolean };
const nav: NavEntry[] = [
  { label: 'Profile Editor' },
  { label: 'Directory Integrations' },
  { label: 'Profile Sources' },
  { label: 'Customizations', section: true },
  { label: 'Applications', section: true, open: true },
  { label: 'Applications' },
  { label: 'Self Service' },
  { label: 'Security', section: true },
  { label: 'Workflow', section: true },
  { label: 'Reports', section: true },
  { label: 'Settings', section: true, open: true },
  { label: 'Account' },
  { label: 'Features' },
  { label: 'Downloads' },
];

const menus: [string, number][] = [
  ['Файл', 108],
  ['Изменить', 166],
  ['Посмотреть', 194],
  ['История', 148],
  ['Закладки', 160],
  ['Профили', 157],
  ['Вкладка', 145],
  ['Окно', 106],
  ['Справка', 120],
];

const SystemMenu = () => (
  <MenuBar>
    <AppleCell>
      <FaApple size={32} color="#efeaf8" />
    </AppleCell>
    <MenuItem $w={142} $strong>
      Chrome
    </MenuItem>
    {menus.map(([label, w]) => (
      <MenuItem key={label} $w={w}>
        {label}
      </MenuItem>
    ))}
    <StatusArea>
      <StatusCell $w={64}>
        <svg width="40" height="34" viewBox="0 0 40 34">
          <g fill="#e9e5f6">
            <path d="M0 15h27q-3 14-14 14Q2 29 0 15z" />
            <rect x="3" y="9" width="5" height="5" />
            <rect x="9" y="9" width="5" height="5" />
            <rect x="15" y="9" width="5" height="5" />
            <rect x="9" y="4" width="5" height="4" />
            <rect x="15" y="4" width="5" height="4" />
            <rect x="16" y="0" width="4" height="3" />
          </g>
          <circle cx="28" cy="22" r="10" fill="#28109c" stroke="#e9e5f6" strokeWidth="2.400" />
          <path d="M28 16v7M28 26v2.500" stroke="#e9e5f6" strokeWidth="2.800" />
        </svg>
      </StatusCell>
      <StatusCell $w={70}>
        <svg width="28" height="28" viewBox="0 0 28 28">
          <circle cx="14" cy="14" r="12.500" fill="none" stroke="#e9e5f6" strokeWidth="2.400" />
          <path d="M10.500 8.500v11l9-5.500z" fill="#e9e5f6" />
        </svg>
      </StatusCell>
      <StatusCell $w={70}>
        <InputSource>A</InputSource>
      </StatusCell>
      <StatusCell $w={86}>
        <svg width="52" height="26" viewBox="0 0 52 26">
          <rect x="1" y="1" width="45" height="24" rx="7" fill="none" stroke="#8f82cc" strokeWidth="2" />
          <rect x="4" y="4" width="39" height="18" rx="4.500" fill="#e9e5f6" />
          <path d="M48 9q3 1 3 4t-3 4z" fill="#8f82cc" />
        </svg>
      </StatusCell>
      <StatusCell $w={72}>
        <svg width="38" height="26" viewBox="0 0 38 26" fill="none" stroke="#e9e5f6" strokeWidth="2.800" strokeLinecap="round">
          <path d="M12 17H9.500a7.500 7.500 0 0 1 0-15H18a7.500 7.500 0 0 1 0 15" />
          <path d="M26 9h2.500a7.500 7.500 0 0 1 0 15H20a7.500 7.500 0 0 1 0-15" />
        </svg>
      </StatusCell>
      <StatusCell $w={68}>
        <svg width="28" height="28" viewBox="0 0 28 28" fill="none" stroke="#e9e5f6" strokeWidth="2.600" strokeLinecap="round">
          <circle cx="11.500" cy="11.500" r="9.500" />
          <path d="m18.500 18.500 8 8" />
        </svg>
      </StatusCell>
      <StatusCell $w={60}>
        <svg width="30" height="28" viewBox="0 0 30 28">
          <rect x="1.500" y="1.500" width="27" height="10.500" rx="5.250" fill="none" stroke="#e9e5f6" strokeWidth="2.400" />
          <circle cx="7" cy="6.700" r="4" fill="#e9e5f6" />
          <rect x="0.500" y="15" width="29" height="12.500" rx="6.250" fill="#e9e5f6" />
          <circle cx="23" cy="21.200" r="3.600" fill="#28109c" />
        </svg>
      </StatusCell>
      <StatusCell $w={64}>
        <svg width="28" height="28" viewBox="0 0 28 28">
          <defs>
            <radialGradient id="siri" cx="0.550" cy="0.500" r="0.550">
              <stop offset="0" stopColor="#fff" />
              <stop offset="0.300" stopColor="#79b8dc" />
              <stop offset="0.650" stopColor="#3f6f80" />
              <stop offset="1" stopColor="#6b5a80" />
            </radialGradient>
          </defs>
          <circle cx="14" cy="14" r="13.500" fill="url(#siri)" />
          <path d="M2 14Q6 3 14 12q-5 1-7 8Q3 20 2 14z" fill="#c4456a" opacity=".75" />
          <path d="M10 3q9-2 14 5-7-3-14-5z" fill="#4fa67a" opacity=".8" />
        </svg>
      </StatusCell>
      <ClockGroup>
        <Clock $w={155}>Ср, 11 янв.</Clock>
        <Clock $w={69}>15:25</Clock>
      </ClockGroup>
    </StatusArea>
  </MenuBar>
);

const TpMark = styled.span`
  color: #e2513f;
  font-size: 29px;
  font-weight: 800;
  line-height: 40px;
  letter-spacing: -3px;
`;

const BrowserChrome = () => (
  <>
    <TabStrip>
      <TrafficLights>
        <Light $c="#ec6a5e" />
        <Light $c="#f4bf50" />
        <Light $c="#61c455" />
      </TrafficLights>
      {tabs.map((t, i) => (
        <Tab key={i} $active={t.active} $rule={t.rule}>
          <IconBox>{t.icon}</IconBox>
          <TabTitle $w={t.active ? 29 : 70}>{t.title}</TabTitle>
          {t.active && (
            <svg width="18" height="18" viewBox="0 0 18 18" stroke="#fff" strokeWidth="2.600">
              <path d="m1.500 1.500 15 15M16.500 1.500l-15 15" />
            </svg>
          )}
        </Tab>
      ))}
      <StripButton $w={85}>
        <svg width="26" height="26" viewBox="0 0 26 26" stroke="#fff" strokeWidth="3">
          <path d="M13 1v24M1 13h24" />
        </svg>
      </StripButton>
      <Spacer />
      <StripButton $w={88}>
        <svg width="20" height="12" viewBox="0 0 20 12" fill="none" stroke="#fff" strokeWidth="2.600">
          <path d="m1.500 1.500 8.500 9 8.500-9" />
        </svg>
      </StripButton>
    </TabStrip>
    <Toolbar>
      <ToolCell>
        <svg width="28" height="26" viewBox="0 0 28 26" fill="none" stroke="#fff" strokeWidth="2.800">
          <path d="M27 13H3M13.500 1.500 2.500 13l11 11.500" />
        </svg>
      </ToolCell>
      <ToolCell>
        <svg width="28" height="26" viewBox="0 0 28 26" fill="none" stroke="#c47f98" strokeWidth="2.800">
          <path d="M1 13h24M14.500 1.500l11 11.500-11 11.500" />
        </svg>
      </ToolCell>
      <ToolCell>
        <MdRefresh size={38} color="#fff" />
      </ToolCell>
      <AddressBar>
        <MdLock size={26} color="#b5b3b8" />
        <AddressText>
          trial-4619730-admin.okta.com<AddressPath>/admin/apps/saml-wizard/create</AddressPath>
        </AddressText>
        <ToolCell>
          <MdGTranslate size={31} color="#bdbabc" />
        </ToolCell>
        <ToolCell>
          <svg width="22" height="28" viewBox="0 0 22 28" fill="none" stroke="#bdb9bc" strokeWidth="2.600">
            <path d="M7 9.500H3.500a2 2 0 0 0-2 2V24.500a2 2 0 0 0 2 2h15a2 2 0 0 0 2-2v-13a2 2 0 0 0-2-2H15M11 18V2M6 6.500l5-5 5 5" />
          </svg>
        </ToolCell>
        <ToolCell>
          <MdStarBorder size={35} color="#c9c2c6" />
        </ToolCell>
      </AddressBar>
      <ToolCell>
        <TpMark>Tp</TpMark>
      </ToolCell>
      <ToolCell>
        <MdExtension size={34} color="#fff" />
      </ToolCell>
      <ToolCell>
        <svg width="28" height="28" viewBox="0 0 28 28">
          <path d="M0 0h28v28H0zM4 4v20h14V4z" fill="#fff" fillRule="evenodd" />
        </svg>
      </ToolCell>
      <ToolCell>
        <Avatar>V</Avatar>
      </ToolCell>
      <UpdateButton>
        Обновить
        <svg width="6" height="28" viewBox="0 0 6 28" fill="#e28a78">
          <circle cx="3" cy="4" r="3" />
          <circle cx="3" cy="14" r="3" />
          <circle cx="3" cy="24" r="3" />
        </svg>
      </UpdateButton>
    </Toolbar>
    <BookmarksBar>
      {bookmarks.map((b, i) => (
        <Bookmark key={i} $w={b.w}>
          <IconBox>{b.icon}</IconBox>
          {b.label}
        </Bookmark>
      ))}
      <span>»</span>
    </BookmarksBar>
  </>
);

const HelpDot = () => (
  <svg width="25" height="25" viewBox="0 0 25 25">
    <circle cx="12.500" cy="12.500" r="12.500" fill="#6e6e78" />
    <text x="12.500" y="18" fontSize="16" fontWeight="700" fill="#fff" textAnchor="middle">
      ?
    </text>
  </svg>
);

const OktaPage = () => (
  <Page>
    <TrialBanner>
      <svg width="26" height="26" viewBox="0 0 26 26" fill="none" stroke={ink} strokeWidth="2.200">
        <circle cx="13" cy="13" r="11.500" />
        <path d="M13 6v7.500l5 3.500" />
      </svg>
      <span>29 days left in your trial.</span>
      <TrialLink>Contact Sales</TrialLink>
    </TrialBanner>
    <Header>
      <Logo>okta</Logo>
      <SearchBox>
        <svg width="34" height="34" viewBox="0 0 34 34" fill="none" stroke="#2f3d4c" strokeWidth="3.200" strokeLinecap="round">
          <circle cx="14" cy="14" r="12" />
          <path d="m22.500 22.500 9.500 9.500" />
        </svg>
        Search...
      </SearchBox>
      <HeaderTools>
        <HeaderIcon>
          <svg width="48" height="48" viewBox="0 0 48 48" fill="none" stroke={ink} strokeWidth="2.800">
            <circle cx="24" cy="24" r="22.500" />
            <path d="M17 19.500q0-8 7.500-8t7.500 7q0 4-4 6.500-4 2.500-4 6v1.500" strokeLinecap="round" />
            <circle cx="24" cy="37" r="1.200" fill={ink} strokeWidth="1.500" />
          </svg>
        </HeaderIcon>
        <HeaderIcon>
          <svg width="48" height="48" viewBox="0 0 48 48" fill="none" stroke={ink} strokeWidth="2.800">
            <rect x="1.500" y="1.500" width="19" height="19" rx="2.500" />
            <rect x="27.500" y="1.500" width="19" height="19" rx="2.500" />
            <rect x="1.500" y="27.500" width="19" height="19" rx="2.500" />
            <rect x="27.500" y="27.500" width="19" height="19" rx="2.500" />
          </svg>
        </HeaderIcon>
        <Account>
          <div>vlad.pesternikov@u...</div>
          <AccountOrg>unskript-trial-4619...</AccountOrg>
        </Account>
        <ChevronSlot>
          <Chevron />
        </ChevronSlot>
      </HeaderTools>
    </Header>
    <Body>
      <Sidebar>
        {nav.map((n, i) =>
          n.section ? (
            <NavSection key={i}>
              {n.label}
              <Chevron up={n.open} />
            </NavSection>
          ) : (
            <NavLink key={i}>{n.label}</NavLink>
          ),
        )}
      </Sidebar>
      <Main>
        <Steps>
          <Step>
            <StepNumber>1</StepNumber>General Settings
          </Step>
          <Step>
            <StepNumber>2</StepNumber>Configure SAML
          </Step>
          <Step $on>
            <StepNumber $on>3</StepNumber>Feedback
          </Step>
        </Steps>
        <Columns>
          <Card>
            <CardHeader>
              <CardNumber>3</CardNumber>
              <CardTitle>Help Okta Support understand how you configured this application</CardTitle>
            </CardHeader>
            <FieldRow $gap={48}>
              <FieldLabel>Are you a customer or partner?</FieldLabel>
              <div>
                <Option>
                  <RadioMark $on />
                  <OptionText>I'm an Okta customer adding an internal app</OptionText>
                </Option>
                <Option>
                  <RadioMark />
                  <OptionText>I'm a software vendor. I'd like to integrate my app with Okta</OptionText>
                </Option>
              </div>
            </FieldRow>
            <Rule $gap={60} />
            <Notice>
              <NoticeIcon>
                <svg width="25" height="25" viewBox="0 0 25 25">
                  <circle cx="12.500" cy="12.500" r="12.500" fill="#fff" />
                  <circle cx="12.500" cy="6.500" r="2" fill={blue} />
                  <path d="M9.500 10.500h3.500v8M9.500 18.500h6.500" stroke={blue} strokeWidth="2.600" fill="none" />
                </svg>
              </NoticeIcon>
              <NoticeText>The optional questions below assist Okta Support in understanding your app integration.</NoticeText>
            </Notice>
            <FieldRow $gap={40}>
              <FieldLabel>
                App type <HelpDot />
              </FieldLabel>
              <Option>
                <CheckMark />
                <OptionText>This is an internal app that we have created</OptionText>
              </Option>
            </FieldRow>
            <FieldRow $gap={48}>
              <FieldLabel>Contact app vendor</FieldLabel>
              <Option>
                <CheckMark />
                <OptionText>It's required to contact the vendor to enable SAML</OptionText>
              </Option>
            </FieldRow>
            <Rule $gap={60} />
            <Question $gap={48}>Which app pages did you consult to configure SAML?</Question>
            <TextBox>
              <div>https://help.okta.com/en-us/Content/Topics/Apps/Apps_App_Integration_Wizard_SAML.htm</div>
              <div>https://community.auth0.com/t/how-to-integrate-okta-and-auth0/71380</div>
              <div>https://auth0.com/docs/authenticate/protocols/saml/saml-sso-integrations/configure-auth0-saml-</div>
              <Resizer width="16" height="16" viewBox="0 0 16 16" fill="none" stroke="#55555c" strokeWidth="1.500">
                <path d="M1 15 15 1M9 15l6-6" />
              </Resizer>
            </TextBox>
            <Question $gap={48}>Did you find SAML docs for this app?</Question>
            <TextBox />
          </Card>
          <Aside>
            <AsideTitle>Why are you asking me this?</AsideTitle>
            <AsideText>
              This form provides Okta Support with useful background information about your app. Thank you for your help—we
              appreciate it.
            </AsideText>
          </Aside>
        </Columns>
      </Main>
    </Body>
  </Page>
);

export default function App() {
  return (
    <>
      <Global />
      <Desktop>
        <SystemMenu />
        <Workspace>
          <Dock />
          <BrowserWindow>
            <BrowserChrome />
            <OktaPage />
          </BrowserWindow>
        </Workspace>
      </Desktop>
    </>
  );
}
